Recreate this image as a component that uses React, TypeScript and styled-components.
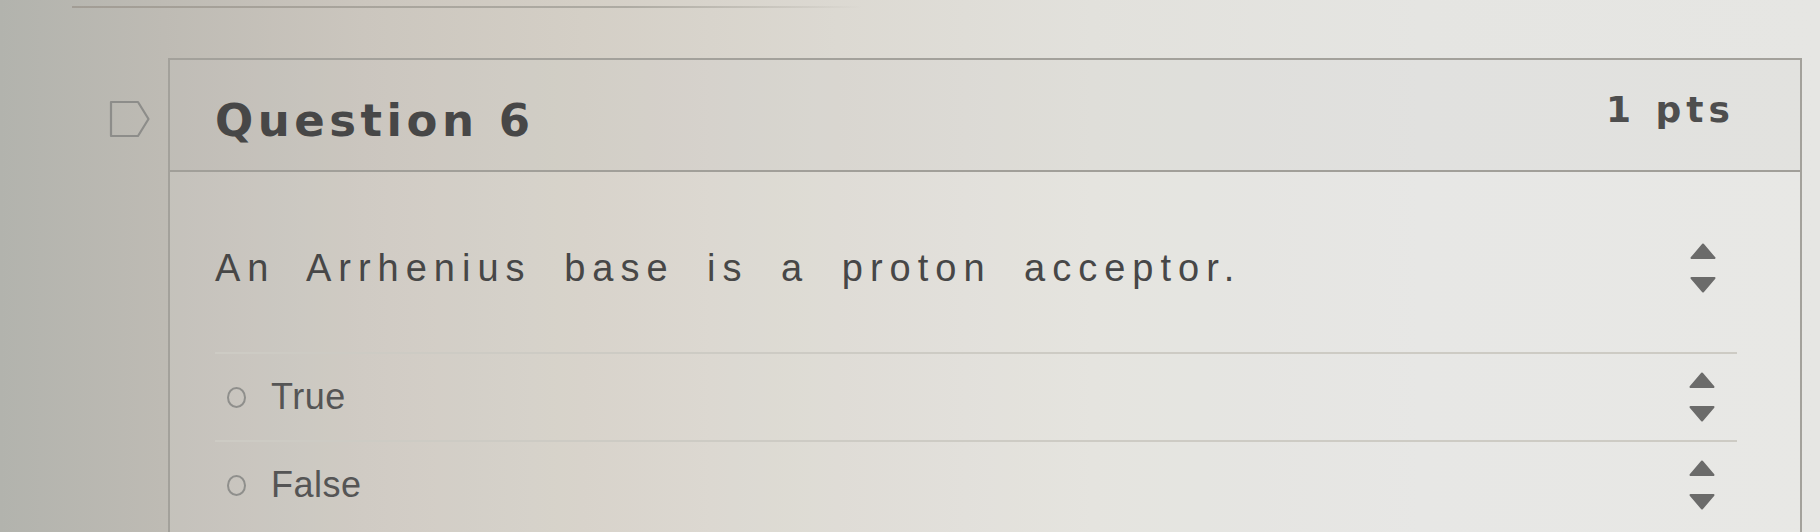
import styled, { createGlobalStyle } from "styled-components";

const GlobalStyle = createGlobalStyle`
  html,
  body {
    margin: 0;
    padding: 0;
  }
  body {
    width: 1820px;
    height: 532px;
    overflow: hidden;
    background: linear-gradient(
      90deg,
      #b2b3ad 0%,
      #bebbb4 9%,
      #cbc6be 20%,
      #d4cfc6 32%,
      #dcd9d2 46%,
      #e2e1dc 60%,
      #e5e5e2 78%,
      #e6e6e3 100%
    );
  }
`;

const Page = styled.div`
  display: flex;
  flex-direction: column;
  height: 532px;
`;

const PrevEdge = styled.div`
  margin-left: 72px;
  width: 790px;
  height: 6px;
  border-bottom: 2px solid transparent;
  border-image: linear-gradient(90deg, #a29d95, #aeaba3 70%, rgba(174, 171, 163, 0)) 1;
  margin-bottom: 50px;
`;

const QuizLayout = styled.div`
  flex: 1;
  display: grid;
  grid-template-columns: 168px 1634px;
  align-items: start;
`;

const Gutter = styled.div`
  height: 114px;
  display: flex;
  align-items: center;
  padding-left: 109px;
  padding-top: 8px;
  box-sizing: border-box;
`;

const Panel = styled.section`
  height: 474px;
  border: 2px solid #a3a19b;
  border-bottom: none;
  background: rgba(255, 255, 255, 0.1);
  box-sizing: border-box;
`;

const Header = styled.header`
  height: 112px;
  display: flex;
  align-items: center;
  justify-content: space-between;
  padding: 0 65px 0 45px;
  border-bottom: 2px solid #a19f99;
  background: rgba(0, 0, 0, 0.025);
  box-sizing: border-box;
`;

const Title = styled.h2`
  margin: 10px 0 0;
  font-family: "DejaVu Sans", Verdana, sans-serif;
  font-weight: 700;
  font-size: 45px;
  letter-spacing: 4.5px;
  color: #474747;
`;

const Points = styled.span`
  margin-bottom: 12px;
  font-family: "DejaVu Sans", Verdana, sans-serif;
  font-weight: 700;
  font-size: 36px;
  letter-spacing: 5px;
  word-spacing: 2px;
  color: #4e4e4e;
`;

const Content = styled.div`
  padding: 0 63px 0 45px;
`;

const Row = styled.div<{ $arrowGap: number }>`
  display: flex;
  align-items: center;
  justify-content: space-between;
  padding-right: ${(p) => p.$arrowGap}px;
`;

const QuestionRow = styled(Row)`
  padding-top: 68px;
  padding-bottom: 56px;
`;

const QuestionText = styled.p`
  margin: 0;
  font-family: "Liberation Sans", Arial, sans-serif;
  font-size: 38px;
  line-height: 56px;
  letter-spacing: 7px;
  word-spacing: 15px;
  color: #474747;
`;

const AnswerRow = styled(Row)`
  height: 86px;
  border-top: 2px solid #cdcbc4;
  padding-left: 12px;
`;

const AnswerLabel = styled.label`
  display: flex;
  align-items: center;
  gap: 25px;
  font-family: "Liberation Sans", Arial, sans-serif;
  font-size: 36px;
  letter-spacing: 0.5px;
  color: #555;
`;

const Radio = styled.span`
  width: 19px;
  height: 21px;
  border: 2px solid #8f8f8c;
  border-radius: 50%;
  box-sizing: border-box;
`;

const Flag = () => (
  <svg width="42" height="38" viewBox="0 0 42 38" fill="none">
    <path
      d="M2 2 H29 L39.5 19 L29 36 H2 Z"
      stroke="#8d8d8a"
      strokeWidth="2.2"
      strokeLinejoin="round"
    />
  </svg>
);

const Reorder = () => (
  <svg width="26" height="50" viewBox="0 0 26 50">
    <path
      d="M13 1.5 L24.5 15 H1.5 Z M1.5 35 H24.5 L13 48.5 Z"
      fill="#6b6b6a"
      stroke="#6b6b6a"
      strokeWidth="2"
      strokeLinejoin="round"
    />
  </svg>
);

const answers = ["True", "False"];

const App = () => {
  return (
    <>
      <GlobalStyle />
      <Page>
        <PrevEdge />
        <QuizLayout>
          <Gutter>
            <Flag />
          </Gutter>
          <Panel>
            <Header>
              <Title>Question 6</Title>
              <Points>1 pts</Points>
            </Header>
            <Content>
              <QuestionRow $arrowGap={21}>
                <QuestionText>An Arrhenius base is a proton acceptor.</QuestionText>
                <Reorder />
              </QuestionRow>
              {answers.map((a) => (
                <AnswerRow key={a} $arrowGap={22}>
                  <AnswerLabel>
                    <Radio />
                    {a}
                  </AnswerLabel>
                  <Reorder />
                </AnswerRow>
              ))}
            </Content>
          </Panel>
        </QuizLayout>
      </Page>
    </>
  );
};

export default App;
